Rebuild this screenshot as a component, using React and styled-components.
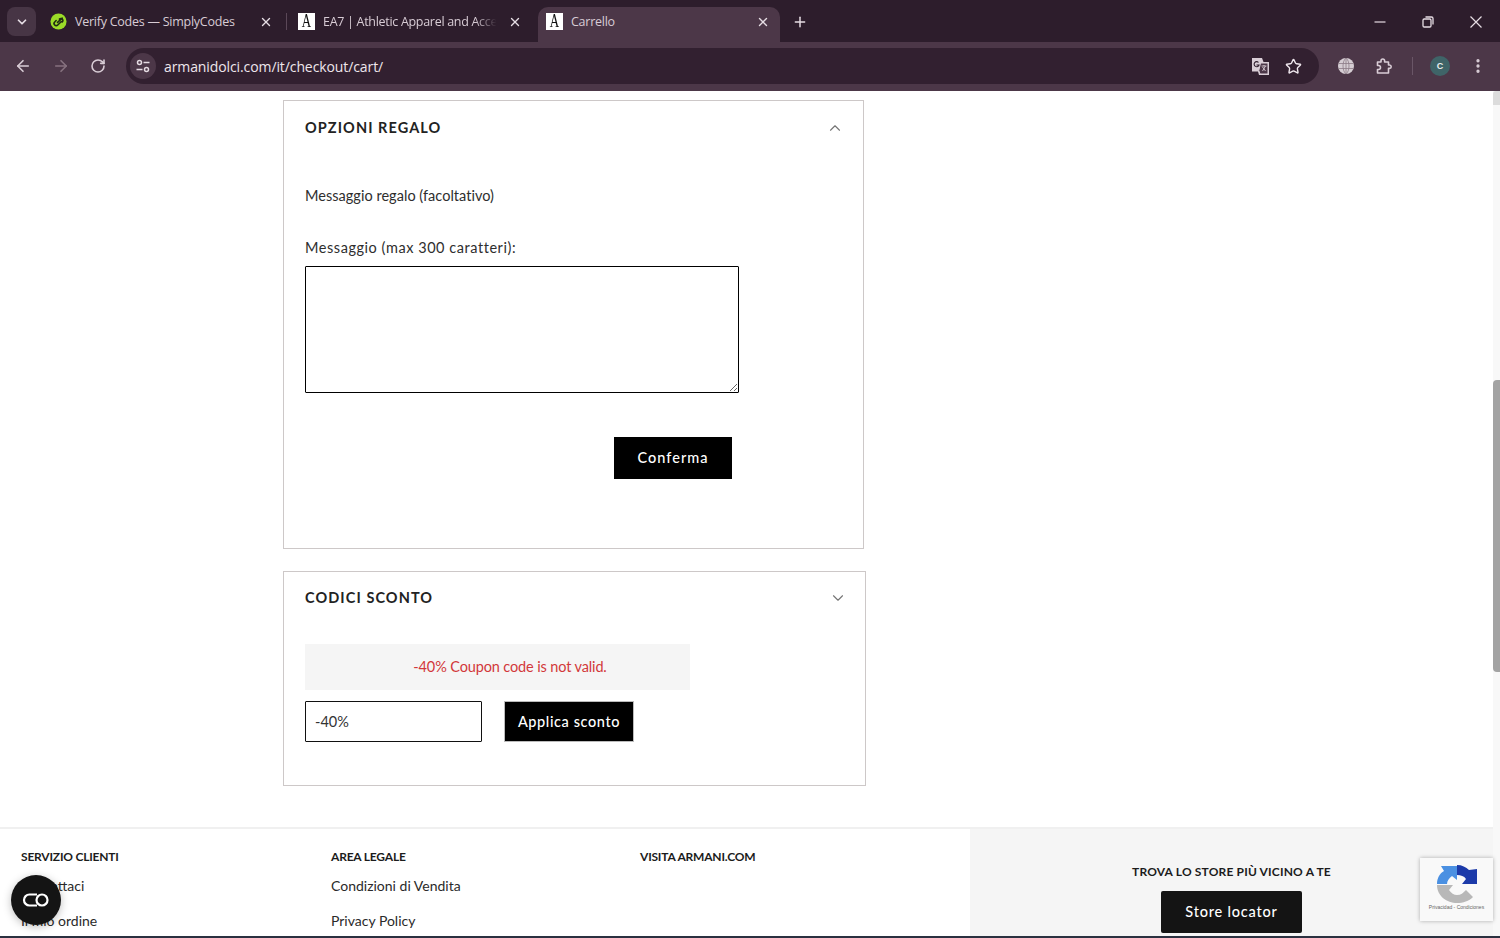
import React from 'react';
import styled, { createGlobalStyle } from 'styled-components';
import { ArrowLeft, ArrowRight, ChevronDown, ChevronUp, MoreVertical, Plus, RotateCw, Star, X } from 'lucide-react';

const GlobalStyle = createGlobalStyle`
  html, body {
    margin: 0;
    height: 938px;
    overflow: hidden;
    background: #fff;
    font-family: Lato, "Liberation Sans", sans-serif;
  }
  * { box-sizing: border-box; }
`;

const Screen = styled.div`
  position: relative;
  width: 1500px;
  height: 938px;
  display: flex;
  flex-direction: column;
  overflow: hidden;
`;

const TabStrip = styled.div`
  height: 42px;
  flex: none;
  background: #2d1d2c;
  display: flex;
  align-items: flex-start;
  padding: 7px 0 0 7px;
  color: #e6dde4;
  font-family: "Open Sans", "Liberation Sans", sans-serif;
`;

const TabMenu = styled.div`
  width: 29px;
  height: 29px;
  border-radius: 8px;
  background: #473545;
  display: flex;
  align-items: center;
  justify-content: center;
  margin-right: 7px;
`;

const Tab = styled.div`
  position: relative;
  width: ${p => p.$width}px;
  height: ${p => (p.$active ? 35 : 29)}px;
  display: flex;
  align-items: center;
  padding: ${p => p.$padding};
  background: ${p => (p.$active ? '#4c3748' : 'transparent')};
  border-radius: 10px 10px 0 0;
  font-size: 12.5px;
  letter-spacing: -0.25px;
  white-space: nowrap;
`;

const TabTitle = styled.span`
  flex: 1;
  margin: 0 ${p => (p.$fade ? 8 : 0)}px 0 8px;
  color: #d8ccd5;
  ${p => p.$fade && `
    letter-spacing: -0.3px;
    mask-image: linear-gradient(90deg, #000 86%, transparent 98%);
  `}
`;

const Favicon = styled.span`
  width: 17px;
  height: 17px;
  flex: none;
  background: #fff;
  color: #111;
  display: flex;
  align-items: center;
  justify-content: center;
  font-family: "Liberation Serif", serif;
  font-size: 18px;
  line-height: 17px;
`;

const FaviconLetter = styled.span`
  display: block;
  transform: scaleX(0.72);
`;

const TabDivider = styled.span`
  width: 1px;
  height: 17px;
  margin-left: 13px;
  background: #5b4858;
`;

const NewTab = styled.div`
  height: 29px;
  margin-left: 12px;
  display: flex;
  align-items: center;
`;

const WindowButtons = styled.div`
  margin-left: auto;
  height: 29px;
  display: flex;
  align-items: center;
`;

const WindowButton = styled.span`
  width: 48px;
  display: flex;
  justify-content: center;
`;

const Toolbar = styled.div`
  height: 49px;
  flex: none;
  background: #4c3748;
  display: flex;
  align-items: flex-start;
  padding: 6px 0 0 14px;
  color: #d9cdd6;
`;

const NavIcons = styled.div`
  height: 36px;
  display: flex;
  align-items: center;
  gap: 20px;
  width: 112px;
`;

const Omnibox = styled.div`
  width: 1193px;
  height: 36px;
  border-radius: 18px;
  background: #322030;
  display: flex;
  align-items: center;
  padding: 0 17px 0 4px;
  font-family: "Open Sans", "Liberation Sans", sans-serif;
  font-size: 14px;
  letter-spacing: -0.1px;
  color: #eee6ec;
`;

const SiteInfo = styled.span`
  width: 26px;
  height: 26px;
  border-radius: 50%;
  background: #4c3748;
  display: flex;
  align-items: center;
  justify-content: center;
  margin-right: 8px;
`;

const Url = styled.span`
  flex: 1;
`;

const OmniIcons = styled.div`
  display: flex;
  align-items: center;
  gap: 15px;
`;

const ToolIcons = styled.div`
  height: 36px;
  display: flex;
  align-items: center;
  margin-left: 8px;
`;

const ToolSlot = styled.span`
  width: ${p => p.$width || 38}px;
  display: flex;
  justify-content: center;
`;

const Separator = styled.span`
  width: 1px;
  height: 18px;
  background: #6a5667;
`;

const Avatar = styled.span`
  width: 20px;
  height: 20px;
  border-radius: 50%;
  background: #3f6468;
  color: #e8eeee;
  font-size: 9px;
  font-weight: 700;
  font-family: "Liberation Sans", sans-serif;
  display: flex;
  align-items: center;
  justify-content: center;
`;

const Viewport = styled.div`
  position: relative;
  flex: 1;
  min-height: 0;
  display: flex;
  overflow: hidden;
  border-bottom: 2px solid #2b3140;
`;

const Page = styled.main`
  flex: 1;
  min-width: 0;
  padding-top: 9px;
  color: #2e2e2e;
`;

const Panels = styled.div`
  padding-left: 283px;
  display: flex;
  flex-direction: column;
  gap: 22px;
`;

const Panel = styled.section`
  width: ${p => p.$width}px;
  height: ${p => p.$height}px;
  border: 1px solid #cdc8c8;
  padding: ${p => p.$top}px ${p => p.$right}px 0 21px;
`;

const PanelHead = styled.div`
  display: flex;
  justify-content: space-between;
  align-items: center;
  height: 17px;
  color: #757575;
`;

const PanelTitle = styled.h2`
  margin: 0;
  font-size: 14.5px;
  font-weight: 700;
  letter-spacing: 1.08px;
  color: #222;
`;

const Note = styled.p`
  margin: 50px 0 0;
  font-size: 14.5px;
  line-height: 19px;
  letter-spacing: 0.03px;
`;

const FieldLabel = styled.label`
  display: block;
  margin-top: 33px;
  font-size: 14.5px;
  line-height: 19px;
  letter-spacing: 0.55px;
`;

const MessageBox = styled.textarea`
  display: block;
  width: 434px;
  height: 127px;
  margin-top: 9px;
  border: 1px solid #000;
  border-radius: 1px;
  background: #fff;
  outline: none;
`;

const Actions = styled.div`
  width: 427px;
  margin-top: 44px;
  display: flex;
  justify-content: flex-end;
`;

const ConfirmButton = styled.button`
  width: 118px;
  height: 42px;
  border: 0;
  padding: 0 0 2px;
  background: #000;
  color: #fff;
  font: 500 14.5px Lato, sans-serif;
  letter-spacing: 1px;
`;

const ErrorBox = styled.div`
  width: 385px;
  height: 46px;
  margin-top: 38px;
  padding: 0 0 2px 25px;
  background: #f5f5f5;
  color: #d2383a;
  font-size: 14.5px;
  letter-spacing: -0.13px;
  display: flex;
  align-items: center;
  justify-content: center;
`;

const CouponRow = styled.div`
  margin-top: 11px;
  display: flex;
  align-items: center;
  gap: 22px;
`;

const CouponInput = styled.input`
  width: 177px;
  height: 41px;
  border: 1px solid #111;
  border-radius: 1px;
  padding: 0 9px;
  font: 14.5px Lato, sans-serif;
  color: #333;
  outline: none;
`;

const ApplyButton = styled.button`
  width: 130px;
  height: 41px;
  border: 1px solid #bbb;
  background: #000;
  color: #fff;
  font: 500 14.5px Lato, sans-serif;
  letter-spacing: 0.6px;
`;

const Footer = styled.footer`
  margin-top: 41px;
  height: 200px;
  border-top: 2px solid #f0f0f0;
  display: flex;
`;

const FooterLinks = styled.div`
  width: 970px;
  flex: none;
  padding: 21px 0 0 21px;
  display: grid;
  grid-template-columns: 310px 309px 1fr;
`;

const FooterHeading = styled.h3`
  margin: 0 0 12px;
  font-size: 12px;
  line-height: 14px;
  font-weight: 700;
  letter-spacing: -0.2px;
  color: #1c1c1c;
`;

const FooterLink = styled.a`
  display: block;
  margin-bottom: 15px;
  font-size: 14px;
  line-height: 20px;
  color: #2a2a2a;
`;

const StorePanel = styled.div`
  flex: 1;
  background: #f5f5f5;
  display: flex;
  flex-direction: column;
  align-items: center;
  padding-top: 35px;
`;

const StoreHeading = styled.h3`
  margin: 0 0 11px;
  font-size: 12px;
  line-height: 16px;
  font-weight: 700;
  letter-spacing: 0.17px;
  color: #1c1c1c;
`;

const StoreButton = styled.button`
  width: 141px;
  height: 42px;
  border: 0;
  padding: 0 0 2px;
  border-radius: 2px;
  background: #141414;
  color: #fff;
  font: 500 14.5px Lato, sans-serif;
  letter-spacing: 0.8px;
`;

const Scrollbar = styled.div`
  width: 7px;
  flex: none;
  background: #f8f8f8;
`;

const ScrollCap = styled.div`
  height: 14px;
  margin-bottom: 275px;
  border-radius: 3px 0 0 0;
  background: #dcdcdc;
`;

const ScrollThumb = styled.div`
  height: 292px;
  border-radius: 4px 0 0 4px;
  background: #a3a3a3;
`;

const AccessButton = styled.button`
  position: absolute;
  left: 11px;
  top: 784px;
  width: 50px;
  height: 50px;
  border: 0;
  border-radius: 50%;
  padding: 0;
  background: #141414;
  box-shadow: 0 2px 8px rgba(0, 0, 0, 0.25);
  display: flex;
  align-items: center;
  justify-content: center;
`;

const Recaptcha = styled.div`
  position: absolute;
  left: 1420px;
  top: 767px;
  width: 73px;
  height: 63px;
  background: #f9f9f9;
  box-shadow: 0 0 4px rgba(0, 0, 0, 0.3);
  display: flex;
  flex-direction: column;
  align-items: center;
  padding-top: 7px;
`;

const RecaptchaText = styled.span`
  margin-top: 1px;
  font: 5px "Liberation Sans", sans-serif;
  color: #666;
  white-space: nowrap;
`;

function SimplyCodesIcon() {
  return (
    <svg width="17" height="17" viewBox="0 0 18 18">
      <circle cx="9" cy="9" r="8.5" fill="#9bdc28" />
      <path d="M13 5.500 8 10M6.500 8 5 9.500a2.200 2.200 0 0 0 3.200 3.200L12 9M10 6.500a2 2 0 0 1 3 0 2 2 0 0 1 0 3" fill="none" stroke="#1f2a12" strokeWidth="1.7" strokeLinecap="round" />
    </svg>
  );
}

function RestoreIcon() {
  return (
    <svg width="12" height="12" viewBox="0 0 12 12" fill="none" stroke="#e6dde4" strokeWidth="1.3">
      <rect x="1" y="3" width="8" height="8" rx="1.2" />
      <path d="M3.500 1H9.500a1.500 1.500 0 0 1 1.500 1.500V8.500" />
    </svg>
  );
}

function MinimizeIcon() {
  return (
    <svg width="12" height="12" viewBox="0 0 12 12" stroke="#e6dde4" strokeWidth="1.2">
      <path d="M0.500 6h11" />
    </svg>
  );
}

function CloseIcon() {
  return (
    <svg width="12" height="12" viewBox="0 0 12 12" stroke="#e6dde4" strokeWidth="1.2">
      <path d="M0.500 0.500l11 11M11.500 0.500l-11 11" />
    </svg>
  );
}

function SiteInfoIcon() {
  return (
    <svg width="14" height="14" viewBox="0 0 14 14" fill="none" stroke="#e4dae1" strokeWidth="1.5">
      <circle cx="3.500" cy="3.500" r="2" />
      <path d="M7.500 3.500H13.500M0.500 10.500H6.500" />
      <circle cx="10.500" cy="10.500" r="2" />
    </svg>
  );
}

function TranslateIcon() {
  return (
    <svg width="19" height="19" viewBox="0 0 19 19">
      <path d="M1 1h10l1.500 4h5.500v13H8l-1-3.500H1z" fill="#d9cdd6" />
      <path d="M9.500 6h7.500v11H9l-1.200-3.500z" fill="#4c3748" stroke="#d9cdd6" />
      <path d="M7.500 5.500a2.500 2.500 0 1 0 .5 2.500H5.500" fill="none" stroke="#322030" strokeWidth="1.1" />
      <path d="M10.500 9h5M13 8v1M11.500 14l3-5M11.500 10l3 4" fill="none" stroke="#d9cdd6" strokeWidth="0.9" />
    </svg>
  );
}

function GlobeIcon() {
  return (
    <svg width="16" height="16" viewBox="0 0 16 16">
      <circle cx="8" cy="8" r="8" fill="#d5cdd3" />
      <path d="M0.500 5.500h15M0.500 10.500h15M8 0v16M8 0C4 3 4 13 8 16M8 0c4 3 4 13 0 16" fill="none" stroke="#8b7b87" strokeWidth="0.8" />
    </svg>
  );
}

function ExtensionIcon() {
  return (
    <svg width="18" height="18" viewBox="0 0 18 18" fill="none" stroke="#d9cdd6" strokeWidth="1.6" strokeLinejoin="round">
      <path d="M2.500 5H6V3.800a1.800 1.800 0 0 1 3.600 0V5H13.500V8h1a1.700 1.700 0 0 1 0 3.400h-1V16H2.500V12.500h1a2 2 0 0 0 0-4h-1Z" />
    </svg>
  );
}

function AccessIcon() {
  return (
    <svg width="28" height="14" viewBox="0 0 28 14" fill="none" stroke="#fff" strokeWidth="2.2">
      <path d="M15 1.500H7.500a5.500 5.500 0 0 0 0 11H15" />
      <circle cx="20" cy="7" r="5.500" />
    </svg>
  );
}

function RecaptchaLogo() {
  return (
    <svg width="40" height="38" viewBox="0 0 40 38">
      <path d="M0 19C0 13 3 8 7 6L4 1H20V15L15 11C12 13 10 16 10 19Z" fill="#4a90e2" />
      <path d="M20 0C25 0 29 2 32 5L40 4V19H25L29 14C27 11 24 10 20 10Z" fill="#1c3aa9" />
      <path d="M0 20H16L12 25C14 28 17 30 20 30C24 30 26 28 29 25L36 32C32 36 26 38 20 38C10 38 0 31 0 20Z" fill="#b8b8b8" />
    </svg>
  );
}

export default function App() {
  return (
    <Screen>
      <GlobalStyle />
      <TabStrip>
        <TabMenu><ChevronDown size={14} strokeWidth={3} /></TabMenu>
        <Tab $width={247} $padding="0 3px 0 7px">
          <SimplyCodesIcon />
          <TabTitle>Verify Codes — SimplyCodes</TabTitle>
          <X size={14} strokeWidth={2.4} />
          <TabDivider />
        </Tab>
        <Tab $width={248} $padding="0 16px 0 8px">
          <Favicon><FaviconLetter>A</FaviconLetter></Favicon>
          <TabTitle $fade>EA7 | Athletic Apparel and Acce</TabTitle>
          <X size={14} strokeWidth={2.4} />
        </Tab>
        <Tab $width={242} $active $padding="0 10px 6px 8px">
          <Favicon><FaviconLetter>A</FaviconLetter></Favicon>
          <TabTitle>Carrello</TabTitle>
          <X size={14} strokeWidth={2.4} />
        </Tab>
        <NewTab><Plus size={16} strokeWidth={2.2} /></NewTab>
        <WindowButtons>
          <WindowButton><MinimizeIcon /></WindowButton>
          <WindowButton><RestoreIcon /></WindowButton>
          <WindowButton><CloseIcon /></WindowButton>
        </WindowButtons>
      </TabStrip>
      <Toolbar>
        <NavIcons>
          <ArrowLeft size={18} strokeWidth={2.2} />
          <ArrowRight size={18} strokeWidth={2.2} color="#86727f" />
          <RotateCw size={16} strokeWidth={2.4} />
        </NavIcons>
        <Omnibox>
          <SiteInfo><SiteInfoIcon /></SiteInfo>
          <Url>armanidolci.com/it/checkout/cart/</Url>
          <OmniIcons>
            <TranslateIcon />
            <Star size={17} strokeWidth={2} />
          </OmniIcons>
        </Omnibox>
        <ToolIcons>
          <ToolSlot><GlobeIcon /></ToolSlot>
          <ToolSlot><ExtensionIcon /></ToolSlot>
          <ToolSlot $width={18}><Separator /></ToolSlot>
          <ToolSlot><Avatar>C</Avatar></ToolSlot>
          <ToolSlot><MoreVertical size={18} strokeWidth={2.4} /></ToolSlot>
        </ToolIcons>
      </Toolbar>
      <Viewport>
        <Page>
          <Panels>
            <Panel $width={581} $height={449} $top={18} $right={19}>
              <PanelHead>
                <PanelTitle>OPZIONI REGALO</PanelTitle>
                <ChevronUp size={18} strokeWidth={1.5} />
              </PanelHead>
              <Note>Messaggio regalo (facoltativo)</Note>
              <FieldLabel>Messaggio (max 300 caratteri):</FieldLabel>
              <MessageBox />
              <Actions><ConfirmButton>Conferma</ConfirmButton></Actions>
            </Panel>
            <Panel $width={583} $height={215} $top={17} $right={18}>
              <PanelHead>
                <PanelTitle>CODICI SCONTO</PanelTitle>
                <ChevronDown size={18} strokeWidth={1.5} />
              </PanelHead>
              <ErrorBox>-40% Coupon code is not valid.</ErrorBox>
              <CouponRow>
                <CouponInput defaultValue="-40%" />
                <ApplyButton>Applica sconto</ApplyButton>
              </CouponRow>
            </Panel>
          </Panels>
          <Footer>
            <FooterLinks>
              <div>
                <FooterHeading>SERVIZIO CLIENTI</FooterHeading>
                <FooterLink>Contattaci</FooterLink>
                <FooterLink>Il mio ordine</FooterLink>
              </div>
              <div>
                <FooterHeading>AREA LEGALE</FooterHeading>
                <FooterLink>Condizioni di Vendita</FooterLink>
                <FooterLink>Privacy Policy</FooterLink>
              </div>
              <div>
                <FooterHeading>VISITA ARMANI.COM</FooterHeading>
              </div>
            </FooterLinks>
            <StorePanel>
              <StoreHeading>TROVA LO STORE PIÙ VICINO A TE</StoreHeading>
              <StoreButton>Store locator</StoreButton>
            </StorePanel>
          </Footer>
        </Page>
        <Scrollbar>
          <ScrollCap />
          <ScrollThumb />
        </Scrollbar>
        <AccessButton><AccessIcon /></AccessButton>
        <Recaptcha>
          <RecaptchaLogo />
          <RecaptchaText>Privacidad - Condiciones</RecaptchaText>
        </Recaptcha>
      </Viewport>
    </Screen>
  );
}
